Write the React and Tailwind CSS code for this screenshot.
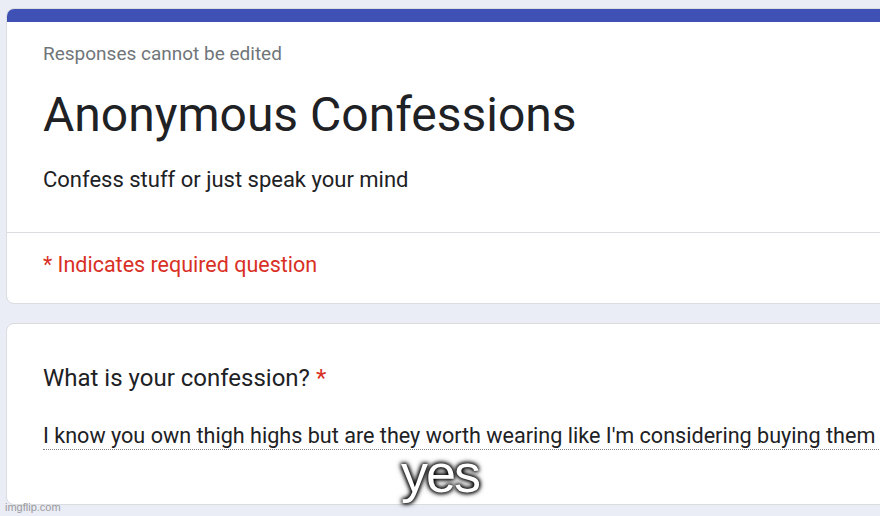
export default function App() {
  return (
    <div
      className="relative w-[880px] h-[516px] overflow-hidden bg-[#ebedf6]"
      style={{ fontFamily: 'Roboto, "Liberation Sans", sans-serif' }}
    >
      <div className="pt-2 pl-[6px] flex flex-col gap-[19px] w-[940px]">
        {/* header card */}
        <div className="bg-white rounded-lg border border-[#dadce0] overflow-hidden">
          <div className="h-[14px] bg-[#3f51b5] -mx-px -mt-px" />
          <div className="pl-[36px] pt-[20px] pb-[38px]">
            <div className="text-[19px] leading-6 text-[#70757a]">Responses cannot be edited</div>
            <h1 className="mt-[21px] text-[48px] leading-[56px] text-[#202124]">Anonymous Confessions</h1>
            <p className="mt-[23px] text-[22px] leading-7 text-[#202124]">Confess stuff or just speak your mind</p>
          </div>
          <div className="border-t border-[#dadce0] pl-[36px] pt-[18px] pb-[24px]">
            <span className="text-[21.5px] leading-7 text-[#d93025]">* Indicates required question</span>
          </div>
        </div>

        {/* question card */}
        <div className="bg-white rounded-lg border border-[#dadce0] pl-[36px] pt-[40px] h-[182px]">
          <div className="text-[24px] leading-7 text-[#202124]">
            What is your confession? <span className="text-[#d93025]">*</span>
          </div>
          <div className="mt-[30px] text-[21.6px] leading-[27px] text-[#202124] whitespace-nowrap w-[860px] border-b border-dotted border-[#80868b]">
            I know you own thigh highs but are they worth wearing like I'm considering buying them
          </div>
        </div>
      </div>

      {/* meme caption overlay */}
      <div
        className="absolute left-0 right-0 top-[451px] text-center text-[54px] leading-[44px] text-white"
        style={{
          fontFamily: '"Liberation Sans", Arial, sans-serif',
          textShadow: '0 0 4px #000, 0 0 4px #000, 0 0 6px #000',
          letterSpacing: '-2px',
        }}
      >
        yes
      </div>
      <div
        className="absolute left-[5px] bottom-[3px] text-[11px] leading-none text-[#9a9a9a]"
        style={{ fontFamily: '"Liberation Sans", Arial, sans-serif' }}
      >
        imgflip.com
      </div>
    </div>
  );
}
